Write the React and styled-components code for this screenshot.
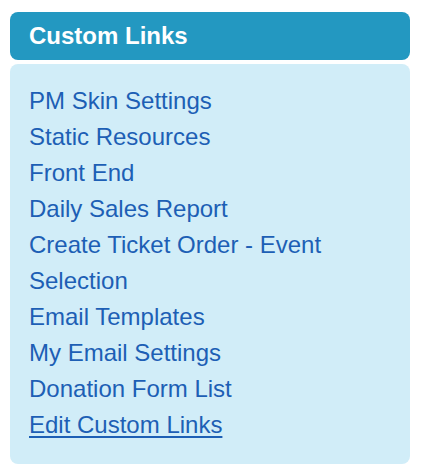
import styled, { createGlobalStyle } from 'styled-components';

const GlobalStyle = createGlobalStyle`
  body {
    margin: 0;
    background: #ffffff;
    font-family: "Liberation Sans", Arial, sans-serif;
  }
`;

const Panel = styled.div`
  display: flex;
  flex-direction: column;
  gap: 4px;
  width: 400px;
  padding: 12px 10px;
`;

const PanelHeader = styled.div`
  background-color: #2398c1;
  color: #ffffff;
  border-radius: 8px;
  height: 48px;
  display: flex;
  align-items: center;
  padding: 0 19px;
  font-size: 24px;
  font-weight: bold;
`;

const PanelBody = styled.ul`
  list-style: none;
  margin: 0;
  background-color: #d1edf8;
  border-radius: 8px;
  padding: 19px 19px 21px;
`;

const LinkItem = styled.li`
  font-size: 24px;
  line-height: 36px;
`;

const Link = styled.a`
  color: #1d5fb5;
  text-decoration: ${props => (props.$underline ? 'underline' : 'none')};
  text-underline-offset: 3px;
`;

const links = [
  'PM Skin Settings',
  'Static Resources',
  'Front End',
  'Daily Sales Report',
  'Create Ticket Order - Event Selection',
  'Email Templates',
  'My Email Settings',
  'Donation Form List',
];

const App = () => {
  return (
    <>
      <GlobalStyle />
      <Panel>
        <PanelHeader>Custom Links</PanelHeader>
        <PanelBody>
          {links.map(label => (
            <LinkItem key={label}>
              <Link href="#">{label}</Link>
            </LinkItem>
          ))}
          <LinkItem>
            <Link href="#" $underline>Edit Custom Links</Link>
          </LinkItem>
        </PanelBody>
      </Panel>
    </>
  );
};

export default App;
